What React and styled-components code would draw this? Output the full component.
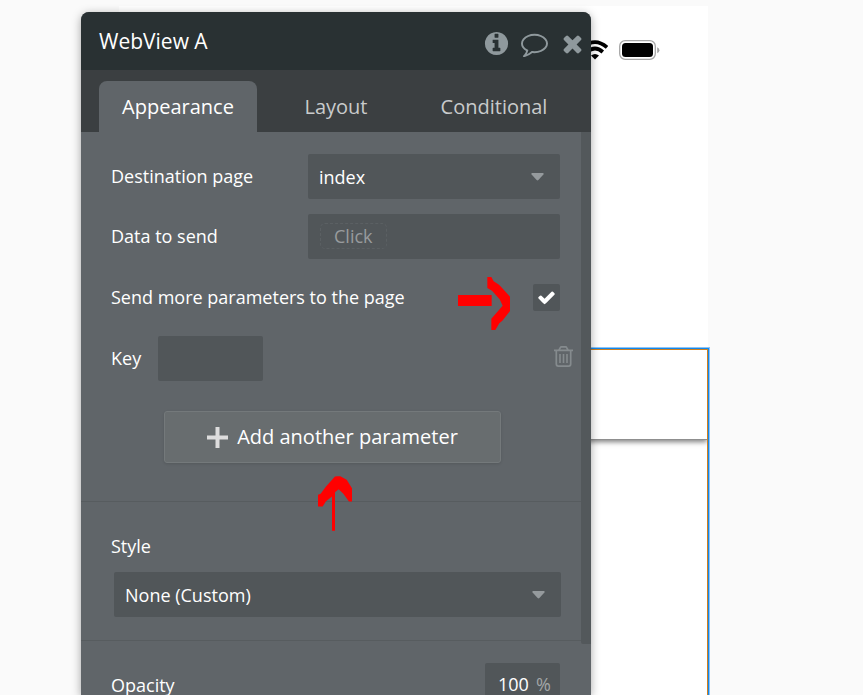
import React, { useState } from "react";
import styled, { createGlobalStyle, css } from "styled-components";

const GlobalStyle = createGlobalStyle`
  * {
    box-sizing: border-box;
  }
  body {
    margin: 0;
    background: #fafafa;
    font-family: "Open Sans", "Noto Sans", sans-serif;
  }
  button,
  input,
  select {
    font: inherit;
    color: inherit;
    margin: 0;
    padding: 0;
    border: none;
    background: none;
    outline: none;
  }
`;

const Stage = styled.main`
  position: relative;
  display: flex;
  height: 100vh;
  padding: 6px 20px 0 119px;
  overflow: hidden;
`;

/* mobile page preview */

const Device = styled.section`
  display: flex;
  flex-direction: column;
  flex: 0 1 589px;
  background: #ffffff;
`;

const StatusBar = styled.div`
  display: flex;
  justify-content: flex-end;
  align-items: flex-start;
  gap: 11px;
  height: 343px;
  padding: 34px 48px 0 0;
`;

const Selected = styled.div`
  flex: 1;
  overflow: hidden;
  border: 1px solid #d0801f;
  border-bottom: none;
  box-shadow: 0 0 0 1px #1588ea, 0 0 0 2px #8cc4f6;
`;

const AppBar = styled.div`
  height: 90px;
  border-bottom: 1px solid #8f8f8f;
  box-shadow: 0 2px 5px rgba(0, 0, 0, 0.5);
`;

/* property editor */

const Panel = styled.section`
  position: absolute;
  top: 12px;
  bottom: 0;
  left: 81px;
  display: flex;
  flex-direction: column;
  width: 510px;
  max-width: calc(100% - 81px);
  border-radius: 8px 8px 0 0;
  background: #606569;
  color: #ffffff;
  box-shadow: 0 2px 10px rgba(0, 0, 0, 0.35);
`;

const PanelHeader = styled.header`
  display: flex;
  align-items: center;
  justify-content: space-between;
  height: 58px;
  padding: 0 5px 0 18px;
  border-radius: 8px 8px 0 0;
  background: #293133;
`;

const PanelTitle = styled.h1`
  margin: 0;
  font-size: 21px;
  font-weight: 400;
  line-height: 28px;
`;

const HeaderActions = styled.div`
  display: flex;
  align-items: center;
  gap: 11px;
  padding-top: 4px;
`;

const IconButton = styled.button`
  display: flex;
  color: ${(props) => props.$color || "#8f999d"};
  cursor: pointer;
`;

const Tabs = styled.div`
  display: flex;
  height: 62px;
  padding: 11px 18px 0;
  background: #3b3f41;
`;

const Tab = styled.button`
  flex: 1;
  border-radius: 8px 8px 0 0;
  font-size: 20px;
  line-height: 28px;
  color: #c9cbcc;
  cursor: pointer;
  ${(props) =>
    props.$active &&
    css`
      background: #606569;
      color: #ffffff;
    `}
`;

const PanelBody = styled.div`
  display: flex;
  flex: 1;
  min-height: 0;
`;

const Content = styled.div`
  flex: 1;
  overflow: hidden;
  font-size: 18px;
  line-height: 24px;
`;

const ScrollTrack = styled.div`
  width: 10px;
`;

const ScrollThumb = styled.div`
  height: 91%;
  border-radius: 0 0 0 2px;
  background: #53585b;
`;

const Section = styled.div`
  display: flex;
  flex-direction: column;
  gap: 15px;
  padding: 22px 0 ${(props) => props.$bottom || 22}px 30px;
  border-bottom: 1px solid #575c5f;
`;

const Row = styled.div`
  display: flex;
  align-items: center;
  justify-content: space-between;
  min-height: ${(props) => props.$height || 45}px;
  padding-right: 21px;
`;

const ParameterRow = styled(Row)`
  justify-content: flex-start;
  gap: 17px;
  padding-right: 8px;

  button {
    margin-left: auto;
    padding-bottom: 4px;
  }
`;

const Label = styled.label`
  padding-bottom: 2px;
`;

const field = css`
  height: 45px;
  border-radius: 2px;
  background: #515659;
`;

const SelectBox = styled.div`
  display: grid;
  align-items: center;
  width: ${(props) => props.$width || "auto"};

  select,
  svg {
    grid-area: 1 / 1;
  }
  svg {
    justify-self: end;
    margin-right: 16px;
    pointer-events: none;
  }
`;

const Select = styled.select`
  ${field}
  width: 100%;
  padding: 0 12px 0 11px;
  appearance: none;
`;

const Expression = styled.div`
  ${field}
  display: flex;
  align-items: center;
  width: 252px;
  padding: 0 12px 2px;
`;

const Placeholder = styled.button`
  height: 26px;
  padding: 0 13px;
  border: 1px dashed #5b6063;
  border-radius: 5px;
  line-height: 24px;
  color: #989b9d;
`;

const KeyInput = styled.input`
  ${field}
  width: 105px;
  padding: 0 11px;
`;

const CheckBox = styled.span`
  display: grid;
  place-items: center;
  width: 27px;
  height: 27px;

  input,
  svg {
    grid-area: 1 / 1;
  }
  svg {
    pointer-events: none;
  }
`;

const CheckInput = styled.input`
  width: 27px;
  height: 27px;
  border-radius: 2px;
  background: #515659;
  appearance: none;
`;

const AddButton = styled.button`
  display: flex;
  align-items: center;
  justify-content: center;
  gap: 9px;
  width: 337px;
  height: 52px;
  margin: 15px 0 0 53px;
  border: 1px solid #74797b;
  border-radius: 3px;
  background: #686d6f;
  box-shadow: 0 1px 3px rgba(0, 0, 0, 0.12);
  font-size: 20px;
  cursor: pointer;
`;

const StyleSection = styled(Section)`
  gap: 12px;
  padding: 32px 20px 23px 30px;

  ${SelectBox} {
    margin-left: 3px;
  }
`;

const PercentBox = styled.span`
  ${field}
  display: flex;
  align-items: center;
  gap: 6px;
  width: 75px;
  padding: 0 10px 3px 13px;
  line-height: 20px;
  color: #a3a6a8;
`;

const PercentInput = styled.input`
  width: 32px;
  color: #ffffff;
`;

/* hand drawn marks lying over the panel */
const Mark = styled.svg`
  position: absolute;
  top: ${(props) => props.$top}px;
  left: ${(props) => props.$left}px;
  fill: #ff0000;
  pointer-events: none;
`;

const Glyph = ({ size, d }) => (
  <svg width={size} height={size} viewBox="0 0 1792 1792" fill="currentColor">
    <path d={d} />
  </svg>
);

const glyphs = {
  info: "M1152 1376v-160q0-14-9-23t-23-9h-96v-512q0-14-9-23t-23-9h-320q-14 0-23 9t-9 23v160q0 14 9 23t23 9h96v320h-96q-14 0-23 9t-9 23v160q0 14 9 23t23 9h448q14 0 23-9t9-23zm-128-896v-192q0-14-9-23t-23-9h-192q-14 0-23 9t-9 23v192q0 14 9 23t23 9h192q14 0 23-9t9-23zm640 416q0 209-103 385.5t-279.5 279.5-385.5 103-385.5-103-279.5-279.5-103-385.5 103-385.5 279.5-279.5 385.5-103 385.5 103 279.5 279.5 103 385.5z",
  comment:
    "M896 384q-204 0-381.5 69.5t-282 187.5-104.5 255q0 112 71.5 213.5t201.5 175.5l87 50-27 96q-24 91-70 172 152-63 275-171l43-38 57 6q69 8 130 8 204 0 381.5-69.5t282-187.5 104.5-255-104.5-255-282-187.5-381.5-69.5zm896 512q0 174-120 321.5t-326 233-450 85.5q-70 0-145-8-198 175-460 242-49 14-114 22h-5q-15 0-27-10.5t-16-27.5v-1q-3-4-.5-12t2-10 4.5-9.5l6-9 7-8.5 8-9q7-8 31-34.5t34.5-38 31-39.5 32.5-51 27-59 26-76q-157-89-247.5-220t-90.5-281q0-174 120-321.5t326-233 450-85.5 450 85.5 326 233 120 321.5z",
  close:
    "M1490 1322q0 40-28 68l-136 136q-28 28-68 28t-68-28l-294-294-294 294q-28 28-68 28t-68-28l-136-136q-28-28-28-68t28-68l294-294-294-294q-28-28-28-68t28-68l136-136q28-28 68-28t68 28l294 294 294-294q28-28 68-28t68 28l136 136q28 28 28 68t-28 68l-294 294 294 294q28 28 28 68z",
  check:
    "M1671 566q0 40-28 68l-724 724-136 136q-28 28-68 28t-68-28l-136-136-362-362q-28-28-28-68t28-68l136-136q28-28 68-28t68 28l294 295 656-657q28-28 68-28t68 28l136 136q28 28 28 68z",
};

const Caret = () => (
  <svg width="13" height="8" viewBox="0 0 13 8" fill="#959a9d">
    <path d="M1 0h11q1.3 0.6 0.4 1.6L7.4 7q-0.9 0.8-1.8 0L0.6 1.6Q-0.3 0.6 1 0z" />
  </svg>
);

const Plus = () => (
  <svg width="21" height="21" viewBox="0 0 21 21" fill="#dddddd">
    <path d="M8.5 0h4v8.5H21v4h-8.5V21h-4v-8.5H0v-4h8.5z" />
  </svg>
);

const Trash = () => (
  <svg
    width="19"
    height="21"
    viewBox="0 0 19 21"
    fill="none"
    stroke="currentColor"
    strokeWidth="1.7"
  >
    <path d="M0 4.3h19M5 4L6.3 1.6Q6.7 0.9 7.4 0.9h4.2q0.8 0 1.1 0.7L14 4" />
    <path d="M2.3 4.5v13.6q0 2 2 2h10.4q2 0 2-2V4.5" />
    <path d="M6 8v9M9.5 8v9M13 8v9" strokeWidth="1.6" />
  </svg>
);

const Wifi = () => (
  <svg width="26" height="20" viewBox="0 0 26 20">
    <g fill="none" stroke="#000000" strokeWidth="3.7">
      <path d="M1 7.4Q13-3 25 7.4" />
      <path d="M5.2 12Q13 5 20.8 12" />
    </g>
    <path d="M9 15.6Q13 12.2 17 15.6L13 19.6z" />
  </svg>
);

const Battery = () => (
  <svg width="41" height="20" viewBox="0 0 41 20">
    <rect
      x="0.7"
      y="0.7"
      width="35.6"
      height="18.6"
      rx="5.5"
      fill="none"
      stroke="#a6a6a6"
      strokeWidth="1.3"
    />
    <rect x="3" y="3" width="31" height="14" rx="3.5" />
    <path d="M38.2 7.2q2.2 1 2.2 3t-2.2 3z" fill="#a6a6a6" />
  </svg>
);

const tabs = ["Appearance", "Layout", "Conditional"];

const App = () => {
  const [tab, setTab] = useState("Appearance");
  const [sendMore, setSendMore] = useState(true);

  return (
    <>
      <GlobalStyle />
      <Stage>
        <Device>
          <StatusBar>
            <Wifi />
            <Battery />
          </StatusBar>
          <Selected>
            <AppBar />
          </Selected>
        </Device>

        <Panel>
          <PanelHeader>
            <PanelTitle>WebView A</PanelTitle>
            <HeaderActions>
              <IconButton aria-label="Info">
                <Glyph size={27} d={glyphs.info} />
              </IconButton>
              <IconButton aria-label="Comment">
                <Glyph size={27} d={glyphs.comment} />
              </IconButton>
              <IconButton aria-label="Close">
                <Glyph size={27} d={glyphs.close} />
              </IconButton>
            </HeaderActions>
          </PanelHeader>
          <Tabs role="tablist">
            {tabs.map((name) => (
              <Tab
                key={name}
                role="tab"
                aria-selected={tab === name}
                $active={tab === name}
                onClick={() => setTab(name)}
              >
                {name}
              </Tab>
            ))}
          </Tabs>
          <PanelBody>
            <Content>
              <Section $bottom={38}>
                <Row>
                  <Label htmlFor="destination">Destination page</Label>
                  <SelectBox $width="252px">
                    <Select id="destination">
                      <option>index</option>
                    </Select>
                    <Caret />
                  </SelectBox>
                </Row>
                <Row>
                  <Label htmlFor="data">Data to send</Label>
                  <Expression>
                    <Placeholder id="data">Click</Placeholder>
                  </Expression>
                </Row>
                <Row $height={47}>
                  <Label htmlFor="more">Send more parameters to the page</Label>
                  <CheckBox>
                    <CheckInput
                      id="more"
                      type="checkbox"
                      checked={sendMore}
                      onChange={() => setSendMore(!sendMore)}
                    />
                    {sendMore && <Glyph size={19} d={glyphs.check} />}
                  </CheckBox>
                </Row>
                <ParameterRow>
                  <Label htmlFor="key">Key</Label>
                  <KeyInput id="key" type="text" />
                  <IconButton aria-label="Delete parameter" $color="#858b8e">
                    <Trash />
                  </IconButton>
                </ParameterRow>
                <AddButton>
                  <Plus />
                  Add another parameter
                </AddButton>
              </Section>
              <StyleSection>
                <Label htmlFor="style">Style</Label>
                <SelectBox>
                  <Select id="style">
                    <option>None (Custom)</option>
                  </Select>
                  <Caret />
                </SelectBox>
              </StyleSection>
              <Section>
                <Row>
                  <Label htmlFor="opacity">Opacity</Label>
                  <PercentBox>
                    <PercentInput id="opacity" type="text" defaultValue="100" />
                    %
                  </PercentBox>
                </Row>
              </Section>
            </Content>
            <ScrollTrack>
              <ScrollThumb />
            </ScrollTrack>
          </PanelBody>
          <Mark $top={265} $left={377} width="52" height="53" viewBox="53 51 156 159">
            <path d="M53 105h101v33H53z" />
            <path d="M141 51h12l7 13 16 10 10 11 23 25v43l-23 29-9 8-12 20h-12v-34l34-39-9-19-23-26-14-8z" />
          </Mark>
          <Mark $top={464} $left={237} width="34" height="55" viewBox="714 257 102 164">
            <path d="M714 313l8-3 16-22 27-30 8-1h8l19 11 16 25v40h-9l-17-23-14-14-11 9v116h-9V318l-18 14-10 16h-14z" />
          </Mark>
        </Panel>
      </Stage>
    </>
  );
};

export default App;
